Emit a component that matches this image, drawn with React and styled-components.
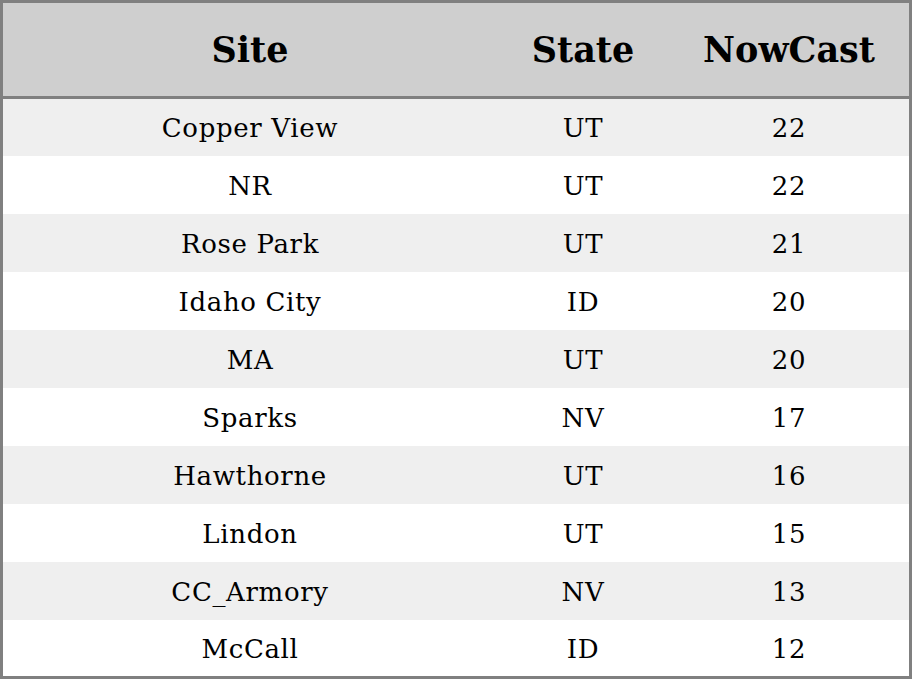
import React from "react";
import styled, { createGlobalStyle } from "styled-components";

const Global = createGlobalStyle`
  html, body { margin: 0; padding: 0; background: #ffffff; }
  body { font-family: "DejaVu Serif", serif; }
`;

const Table = styled.table`
  width: 912px;
  height: 679px;
  border-collapse: collapse;
  border: 3px solid #808080;
  box-sizing: border-box;
  table-layout: fixed;
  font-family: "DejaVu Serif", serif;
  color: #000;
`;

const HeadRow = styled.tr`
  background: #cfcfcf;
  height: 96px;
  border-bottom: 3px solid #808080;
`;

const Th = styled.th`
  font-size: 35px;
  font-weight: bold;
  text-align: center;
  padding: 0;
  width: ${(p) => p.$w}px;
`;

const Row = styled.tr`
  background: ${(p) => (p.$odd ? "#efefef" : "#ffffff")};
  height: 58px;
`;

const Td = styled.td`
  font-size: 26px;
  text-align: center;
  padding: 2px 0 0 0;
  letter-spacing: 0.65px;
`;

const data = [
  ["Copper View", "UT", 22],
  ["NR", "UT", 22],
  ["Rose Park", "UT", 21],
  ["Idaho City", "ID", 20],
  ["MA", "UT", 20],
  ["Sparks", "NV", 17],
  ["Hawthorne", "UT", 16],
  ["Lindon", "UT", 15],
  ["CC_Armory", "NV", 13],
  ["McCall", "ID", 12],
];

export default function App() {
  return (
    <>
      <Global />
      <Table>
        <thead>
          <HeadRow>
            <Th $w={494}>Site</Th>
            <Th $w={172}>State</Th>
            <Th $w={240}>NowCast</Th>
          </HeadRow>
        </thead>
        <tbody>
          {data.map((r, i) => (
            <Row key={i} $odd={i % 2 === 0}>
              <Td>{r[0]}</Td>
              <Td>{r[1]}</Td>
              <Td>{r[2]}</Td>
            </Row>
          ))}
        </tbody>
      </Table>
    </>
  );
}
